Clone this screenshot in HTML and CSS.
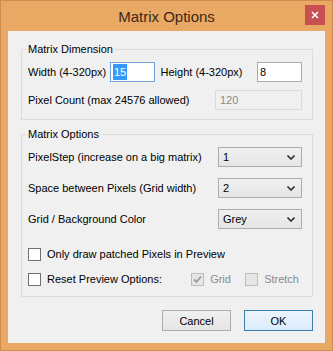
FILE: index.html
```html
<!DOCTYPE html>
<html lang="en">
<head>
    <meta charset="UTF-8">
    <title>Matrix Options</title>
    <link rel="stylesheet" href="styles.css">
</head>
<body>
    <div class="window">
        <div class="titlebar">
            <span class="title">Matrix Options</span>
            <div class="close-button">
                <svg width="8" height="8" viewBox="0 0 8 8"><path d="M1 1 L7 7 M7 1 L1 7" stroke="#fff" stroke-width="1.6"/></svg>
            </div>
        </div>
        <div class="client">
            <fieldset class="group group-dimension">
                <legend>Matrix Dimension</legend>
                <div class="row">
                    <span class="label label-width">Width (4-320px)</span>
                    <div class="textbox focused"><span class="selected">15</span></div>
                    <span class="label label-height">Height (4-320px)</span>
                    <div class="textbox">8</div>
                </div>
                <div class="row">
                    <span class="label">Pixel Count (max 24576 allowed)</span>
                    <div class="textbox disabled">120</div>
                </div>
            </fieldset>
            <fieldset class="group group-options">
                <legend>Matrix Options</legend>
                <div class="row">
                    <span class="label">PixelStep (increase on a big matrix)</span>
                    <div class="combo"><span>1</span><svg width="8" height="5" viewBox="0 0 8 5"><path d="M0.5 0.5 L4 4 L7.5 0.5" fill="none" stroke="#333" stroke-width="1.6"/></svg></div>
                </div>
                <div class="row">
                    <span class="label">Space between Pixels (Grid width)</span>
                    <div class="combo"><span>2</span><svg width="8" height="5" viewBox="0 0 8 5"><path d="M0.5 0.5 L4 4 L7.5 0.5" fill="none" stroke="#333" stroke-width="1.6"/></svg></div>
                </div>
                <div class="row">
                    <span class="label">Grid / Background Color</span>
                    <div class="combo"><span>Grey</span><svg width="8" height="5" viewBox="0 0 8 5"><path d="M0.5 0.5 L4 4 L7.5 0.5" fill="none" stroke="#333" stroke-width="1.6"/></svg></div>
                </div>
                <div class="check-row first">
                    <span class="checkbox"></span>
                    <span class="label">Only draw patched Pixels in Preview</span>
                </div>
                <div class="check-row">
                    <span class="checkbox"></span>
                    <span class="label">Reset Preview Options:</span>
                    <span class="checkbox disabled grid">
                        <svg width="11" height="11" viewBox="0 0 11 11"><path d="M2 5.5 L4.5 8 L9 2.5" fill="none" stroke="#9a9a9a" stroke-width="1.8"/></svg>
                    </span>
                    <span class="label label-disabled label-grid">Grid</span>
                    <span class="checkbox disabled"></span>
                    <span class="label label-disabled label-stretch">Stretch</span>
                </div>
            </fieldset>
            <div class="buttons">
                <div class="button">Cancel</div>
                <div class="button default">OK</div>
            </div>
        </div>
    </div>
</body>
</html>
```

FILE: styles.css
```css
body {
    margin: 0;
    font-family: 'Liberation Sans', Arial, sans-serif;
    font-size: 11px;
    color: #000;
    background: #e9a864;
}
.window {
    width: 333px;
    height: 351px;
    box-sizing: border-box;
    background: #e9a864;
    border: 1px solid #d08c4c;
    display: flex;
    flex-direction: column;
}
.titlebar {
    height: 30px;
    position: relative;
    display: flex;
    align-items: center;
    justify-content: center;
}
.title {
    font-size: 15px;
    color: #3b2a18;
    margin-top: 1px;
}
.close-button {
    position: absolute;
    right: 7px;
    top: 4px;
    width: 20px;
    height: 20px;
    background: #c75050;
    display: flex;
    align-items: center;
    justify-content: center;
}
.client {
    margin: 0 7px;
    height: 312px;
    box-sizing: border-box;
    background: #f0f0f0;
    padding: 11px 12px 0 13px;
}
.group {
    margin: 0;
    border: 1px solid #dcdcdc;
    padding: 0 10px 0 6px;
}
.group legend {
    padding: 0 2px;
    margin-left: -2px;
    line-height: 14px;
}
.group-dimension {
    padding-bottom: 9px;
}
.group-options {
    margin-top: 7px;
    padding-bottom: 7px;
}
.row {
    display: flex;
    align-items: center;
    height: 20px;
    margin-top: 6px;
}
.group-dimension .row + .row {
    margin-top: 8px;
}
.group-options .row + .row {
    margin-top: 11px;
}
.label {
    white-space: nowrap;
}
.label-width {
    width: 82px;
}
.label-height {
    margin-left: auto;
    margin-right: 9px;
}
.textbox {
    width: 45px;
    height: 20px;
    box-sizing: border-box;
    border: 1px solid #abadb3;
    background: #fff;
    padding: 0 2px;
    line-height: 18px;
}
.row .textbox:last-child {
    margin-left: auto;
}
.textbox.focused {
    border-color: #6ea6dc;
}
.selected {
    display: inline-block;
    background: #3399ff;
    color: #fff;
    line-height: 16px;
    padding: 0 1px;
}
.textbox.disabled {
    width: 87px;
    background: #f0f0f0;
    border-color: #d9d9d9;
    color: #8a8a8a;
    padding-left: 4px;
}
.combo {
    margin-left: auto;
    width: 84px;
    height: 20px;
    box-sizing: border-box;
    border: 1px solid #acacac;
    background: linear-gradient(#f0f0f0, #e5e5e5);
    display: flex;
    align-items: center;
    justify-content: space-between;
    padding: 0 6px 0 4px;
}
.check-row {
    display: flex;
    align-items: center;
    height: 20px;
    margin-top: 5px;
}
.check-row.first {
    margin-top: 15px;
}
.checkbox {
    width: 13px;
    height: 13px;
    box-sizing: border-box;
    border: 1px solid #707070;
    background: #fff;
    margin-right: 6px;
    display: flex;
    align-items: center;
    justify-content: center;
}
.checkbox.disabled {
    border-color: #bcbcbc;
    background: #e6e6e6;
}
.checkbox.grid {
    margin-left: auto;
}
.label-disabled {
    color: #8a8a8a;
}
.label-grid {
    width: 35px;
}
.label-stretch {
    margin-right: 3px;
}
.buttons {
    display: flex;
    justify-content: flex-end;
    gap: 13px;
    margin-top: 13px;
}
.button {
    width: 69px;
    height: 21px;
    box-sizing: border-box;
    border: 1px solid #acacac;
    background: linear-gradient(#f0f0f0, #e5e5e5);
    display: flex;
    align-items: center;
    justify-content: center;
}
.button.default {
    border-color: #3c7fb1;
    background: linear-gradient(#ecf4fc, #dcecfc);
}
```
